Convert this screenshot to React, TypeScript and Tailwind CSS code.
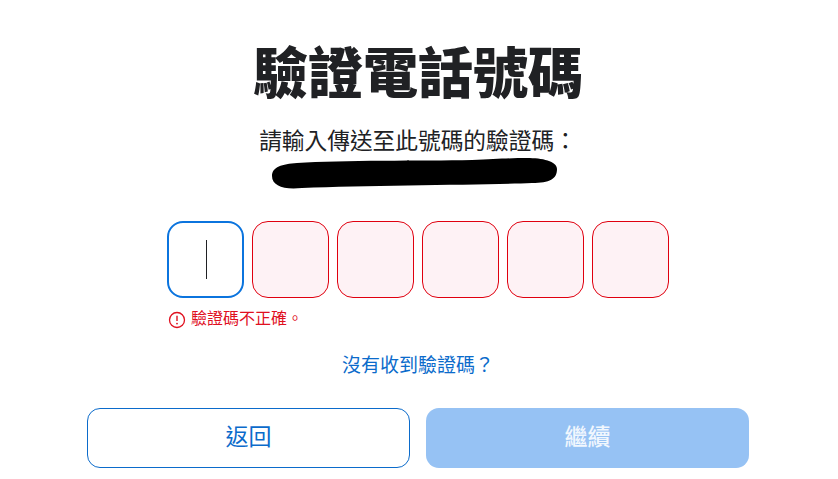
export default function App() {
  return (
    <div className="h-[479px] w-[838px] overflow-hidden bg-white pl-[87px] font-['Roboto','Noto_Sans_CJK_TC',sans-serif] text-[#202124]">
      <div className="flex w-[662px] flex-col items-center pt-[38px]">
        <h1 className="text-[55px] leading-[72px] font-black">驗證電話號碼</h1>
        <p className="mt-[17px] text-[22.7px] leading-[30px]">請輸入傳送至此號碼的驗證碼：</p>
        <svg className="mt-px mr-[7px] block" width="285" height="31" viewBox="0 0 285 31">
          <path d="M0 18 C0 9 10 6 25 5 C70 2 150 3 200 2 C225 1 240 0 255 0 C270 0 285 3 285 11 C285 21 278 25 260 25 C210 27 100 27 30 30 C12 32 0 28 0 18 Z" fill="#000" />
        </svg>

        <div className="mt-[32px] w-[502px]">
          <div className="flex gap-2">
            <div className="flex size-[77px] items-center justify-center rounded-[16px] border-2 border-[#0b74de] bg-white">
              <div className="ml-px h-[39px] w-px bg-[#202124]" />
            </div>
            {[1, 2, 3, 4, 5].map((i) => (
              <div key={i} className="size-[77px] rounded-[16px] border border-[#e0000f] bg-[#fef2f5]" />
            ))}
          </div>
          <div className="mt-[10px] flex items-center gap-[5px] pl-px text-[16px] leading-[20px] text-[#e0101f]">
            <svg width="18" height="18" viewBox="0 0 18 18" fill="none" className="mt-[3px] shrink-0">
              <circle cx="9" cy="9" r="7.5" stroke="#e0101f" strokeWidth="1.3" />
              <path d="M9 4.8V10" stroke="#e0101f" strokeWidth="1.4" />
              <circle cx="9" cy="12.6" r="0.9" fill="#e0101f" />
            </svg>
            <span>驗證碼不正確。</span>
          </div>
        </div>

        <a className="mt-[24px] text-[19px] leading-[26px] text-[#0b6bcb]">沒有收到驗證碼？</a>

        <div className="mt-[29px] flex w-full gap-4">
          <button className="h-[60px] w-[323px] rounded-[13px] border border-[#0b6bcb] bg-white text-[23px] text-[#0b6bcb]">返回</button>
          <button className="h-[60px] w-[323px] rounded-[13px] bg-[#96c2f4] text-[23px] font-medium text-[#f1f7fe]">繼續</button>
        </div>
      </div>
    </div>
  );
}
